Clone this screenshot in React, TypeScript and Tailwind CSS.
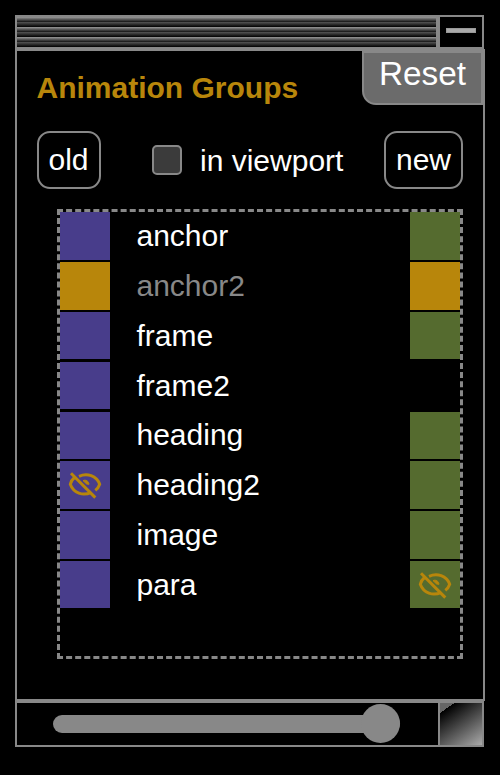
import React from "react";

type Cell = "on" | "gold" | "eye" | "none";
type Row = { name: string; left: Cell; right: Cell; top: string; h: string; dim?: boolean; lead?: string };

const rows: Row[] = [
  { name: "anchor", left: "on", right: "on", top: "mt-0", h: "h-[48px]" },
  { name: "anchor2", left: "gold", right: "gold", top: "mt-[2px]", h: "h-[48px]", dim: true },
  { name: "frame", left: "on", right: "on", top: "mt-[2px]", h: "h-[47px]" },
  { name: "frame2", left: "on", right: "none", top: "mt-[3px]", h: "h-[47px]" },
  { name: "heading", left: "on", right: "on", top: "mt-[3px]", h: "h-[47px]", lead: "leading-[46px]" },
  { name: "heading2", left: "eye", right: "on", top: "mt-[2px]", h: "h-[48px]" },
  { name: "image", left: "on", right: "on", top: "mt-[2px]", h: "h-[48px]" },
  { name: "para", left: "on", right: "eye", top: "mt-[2px]", h: "h-[47px]" },
];

function EyeOff() {
  return (
    <svg width="36" height="36" viewBox="0 0 36 36" fill="none" stroke="#b8860b" strokeWidth="3">
      <path d="M12 9.300C20 5.800 29.500 8.500 32.700 17.300C31.800 20 30.300 21.900 28.300 23.400" />
      <path d="M7.500 10.500C5.300 12.300 3.900 14.500 3.300 17.300C6.500 26.200 16 29.300 24.300 25.300" />
      <path d="M4 6.300L28.300 30.600" />
      <path d="M16 13.600C19 12.300 21.800 14.300 22 17.300L19.600 17Z" fill="#b8860b" strokeWidth="1" />
    </svg>
  );
}

function Swatch({ cell, color }: { cell: Cell; color: string }) {
  const bg = cell === "none" ? "bg-black" : cell === "gold" ? "bg-[#b8860b]" : color;
  return (
    <div className={`flex h-full w-[50px] items-center justify-center ${bg}`}>
      {cell === "eye" && <EyeOff />}
    </div>
  );
}

export default function App() {
  return (
    <div className="flex h-[775px] w-[500px] flex-col bg-black pl-[15px] pt-[15px] font-['Liberation_Sans',Arial,sans-serif] text-white">
      <header className="flex h-[34px] w-[469px] shrink-0 border-2 border-[#888]">
        <div className="h-[30px] w-[419px] bg-[repeating-linear-gradient(to_bottom,#999_0px,#111_5px,#555_5px,#000_10px)]" />
        <div className="flex h-[30px] w-[46px] items-center justify-center border-l-4 border-[#888] pb-[3px]">
          <div className="h-[5px] w-[30px] border border-[#999] bg-[#aaa]" />
        </div>
      </header>
      <main className="h-[652px] w-[470px] shrink-0 border-2 border-[#888]">
        <div className="flex h-[80px] justify-between pl-[20px]">
          <h1 className="-ml-[0.500px] pt-[19px] text-[30px] font-bold leading-[36px] text-[#b8860b]">Animation Groups</h1>
          <button className="h-[54px] w-[121px] rounded-bl-[14px] border-2 border-[#888] bg-[#6b6b6b] pb-[8px] text-[33.300px] leading-[38px]">Reset</button>
        </div>
        <div className="flex h-[58px] items-center pl-[20px] text-[30px]">
          <button className="h-[58px] w-[64px] rounded-[13px] border-2 border-[#888] pb-[2px] pr-px">old</button>
          <label className="ml-[51px] flex w-[232px] items-center">
            <span className="mr-[18px] h-[30px] w-[30px] rounded-[5px] border-[2.500px] border-[#888] bg-[#3b3b3b]" />
            <span>in viewport</span>
          </label>
          <button className="h-[58px] w-[79px] rounded-[13px] border-2 border-[#888] pb-[2px]">new</button>
        </div>
        <div className="ml-[40px] mt-[20px] h-[450px] w-[406px] border-[3px] border-dashed border-[#888]">
          {rows.map((r) => (
            <div key={r.name} className={`flex ${r.top} ${r.h}`}>
              <Swatch cell={r.left} color="bg-[#483d8b]" />
              <div className={`flex-1 pl-[26.500px] text-[30px] ${r.lead ?? "leading-[48px]"} ${r.dim ? "text-[#888]" : "text-white"}`}>{r.name}</div>
              <Swatch cell={r.right} color="bg-[#556b2f]" />
            </div>
          ))}
        </div>
      </main>
      <footer className="flex h-[46px] w-[469px] shrink-0 border-2 border-[#888]">
        <div className="flex w-[421px] items-center pb-px pl-[36px]">
          <div className="flex h-[18px] w-[347px] items-center justify-end rounded-full bg-[#888]">
            <div className="h-[39px] w-[39px] shrink-0 rounded-full bg-[#888]" />
          </div>
        </div>
        <div className="w-[44px] border-l-2 border-[#888] bg-[linear-gradient(145deg,#666_0%,#666_14%,#000_14%,#aaa_100%)]" />
      </footer>
    </div>
  );
}
